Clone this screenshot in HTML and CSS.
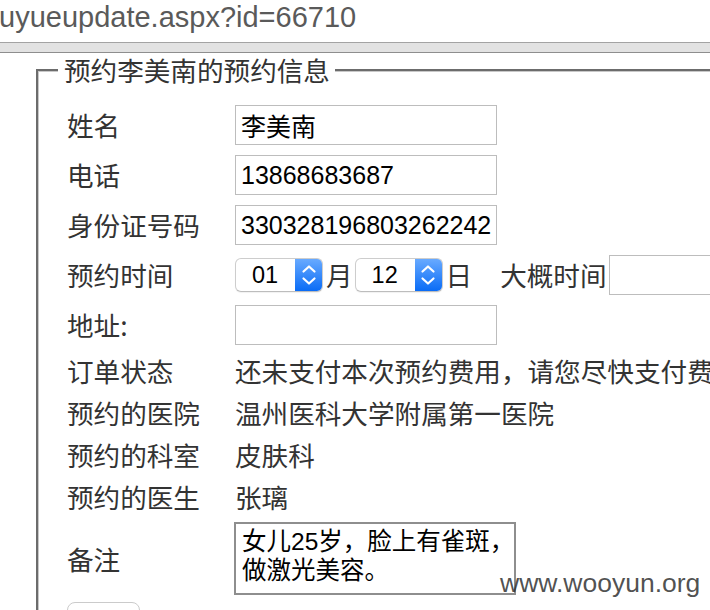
FILE: index.html
```html
<!DOCTYPE html>
<html lang="zh-CN">
<head>
<meta charset="utf-8">
<title>预约信息</title>
<link rel="stylesheet" href="styles.css">
</head>
<body>
<div class="url">uyueupdate.aspx?id=66710</div>
<div class="bar"></div>
<fieldset class="box">
  <legend class="box-title">预约李美南的预约信息</legend>
  <table class="form">
    <colgroup><col class="c1"><col class="c2"></colgroup>
    <tr>
      <td class="lbl">姓名</td>
      <td><input class="txt" type="text" value="李美南"></td>
    </tr>
    <tr>
      <td class="lbl">电话</td>
      <td><input class="txt" type="text" value="13868683687"></td>
    </tr>
    <tr>
      <td class="lbl">身份证号码</td>
      <td><input class="txt" type="text" value="330328196803262242"></td>
    </tr>
    <tr>
      <td class="lbl">预约时间</td>
      <td>
        <div class="date">
          <span class="sel"><span class="sel-val">01</span><span class="step"><svg width="16" height="24" viewBox="0 0 16 24"><path d="M2.5 8.5 L8 3.5 L13.5 8.5 M2.5 15.5 L8 20.5 L13.5 15.5" fill="none" stroke="#fff" stroke-width="2.2" stroke-linecap="round" stroke-linejoin="round"/></svg></span></span>
          <span class="unit">月</span>
          <span class="sel"><span class="sel-val">12</span><span class="step"><svg width="16" height="24" viewBox="0 0 16 24"><path d="M2.5 8.5 L8 3.5 L13.5 8.5 M2.5 15.5 L8 20.5 L13.5 15.5" fill="none" stroke="#fff" stroke-width="2.2" stroke-linecap="round" stroke-linejoin="round"/></svg></span></span>
          <span class="unit">日</span>
          <span class="unit about">大概时间</span>
          <input class="txt wide" type="text" value="">
        </div>
      </td>
    </tr>
    <tr>
      <td class="lbl">地址:</td>
      <td><input class="txt" type="text" value=""></td>
    </tr>
    <tr class="plain">
      <td class="lbl">订单状态</td>
      <td class="val">还未支付本次预约费用，请您尽快支付费用，以免影响您的预约</td>
    </tr>
    <tr class="plain">
      <td class="lbl">预约的医院</td>
      <td class="val">温州医科大学附属第一医院</td>
    </tr>
    <tr class="plain">
      <td class="lbl">预约的科室</td>
      <td class="val">皮肤科</td>
    </tr>
    <tr class="plain">
      <td class="lbl">预约的医生</td>
      <td class="val">张璃</td>
    </tr>
    <tr class="note-row">
      <td class="lbl">备注</td>
      <td><textarea class="note" wrap="off">女儿25岁，脸上有雀斑，
做激光美容。</textarea></td>
    </tr>
    <tr class="btn-row">
      <td class="lbl"><button class="btn" type="button">修改</button></td>
      <td></td>
    </tr>
  </table>
</fieldset>
<div class="mark">www.wooyun.org</div>
</body>
</html>
```
FILE: styles.css
```css
html, body {
  margin: 0;
  padding: 0;
  background: #fff;
}
body {
  width: 710px;
  height: 610px;
  overflow: hidden;
  position: relative;
  font-family: "Noto Sans CJK SC", "Liberation Sans", sans-serif;
  color: #333;
}
.url {
  height: 34px;
  line-height: 34px;
  font-family: "Liberation Sans", sans-serif;
  font-size: 29px;
  color: #5a5a5a;
  margin-left: -1px;
  white-space: nowrap;
}
.bar {
  margin-top: 8px;
  height: 9px;
  background: #e2e2e2;
  border-top: 1px solid #a3a3a3;
  border-bottom: 1px solid #8e8e8e;
}
.box {
  margin: 2px 0 0 36px;
  width: 760px;
  border: 2px solid #6c6c6c;
  box-shadow: inset 1px 1px 0 #c8c8c8;
  padding: 15px 0 0 20px;
  min-width: 0;
}
.box-title {
  background: #fff;
  padding: 0 5px 0 6px;
  font-size: 26.6px;
  line-height: 30px;
  color: #333;
}
.form {
  margin-left: 9px;
  border-collapse: collapse;
  table-layout: fixed;
  width: 730px;
}
.c1 {
  width: 168px;
}
.c2 {
  width: 562px;
}
.form td {
  padding: 5px 0;
  vertical-align: middle;
  font-size: 26.6px;
  line-height: 32px;
  white-space: nowrap;
  overflow: visible;
}
.form td.lbl {
  color: #333;
}
.val {
  color: #333;
}
.txt {
  display: block;
  box-sizing: border-box;
  width: 262px;
  height: 40px;
  margin: 0;
  border: 1px solid #bdbdbd;
  border-radius: 0;
  padding: 0 4px 0 5px;
  font-family: "Liberation Sans", "Noto Sans CJK SC", sans-serif;
  font-size: 25px;
  color: #000;
  background: #fff;
  outline: none;
}
.date {
  display: flex;
  align-items: center;
  height: 40px;
}
.sel {
  display: inline-flex;
  box-sizing: border-box;
  width: 88px;
  height: 34px;
  border: 1px solid #cdcdcd;
  border-bottom-color: #bdbdbd;
  border-radius: 6px;
  overflow: hidden;
  background: #fff;
  box-shadow: 0 1px 1px rgba(0, 0, 0, 0.06);
  flex: none;
}
.sel-val {
  flex: 1;
  padding-left: 16px;
  font-family: "Liberation Sans", sans-serif;
  font-size: 23.5px;
  line-height: 32px;
  color: #000;
}
.step {
  width: 27px;
  display: flex;
  align-items: center;
  justify-content: center;
  background: linear-gradient(#68aaff, #0a6cf6);
}
.unit {
  margin: 0 2px 0 3px;
  font-size: 26.6px;
  line-height: 32px;
  color: #333;
  flex: none;
}
.unit.about {
  margin: 0 2px 0 26px;
}
.txt.wide {
  width: 200px;
  flex: none;
}
.note-row td {
  padding: 4px 0 6px;
}
.note {
  display: block;
  box-sizing: border-box;
  width: 282px;
  height: 73px;
  margin: 0 0 0 -1px;
  border: 2px solid #8e8e8e;
  padding: 3px 0 3px 6px;
  font-family: "Liberation Sans", "Noto Sans CJK SC", sans-serif;
  font-size: 24.5px;
  line-height: 29px;
  color: #000;
  resize: none;
  overflow: hidden;
  white-space: pre;
  outline: none;
}
.btn-row td {
  padding: 1px 0 0;
}
.btn {
  width: 73px;
  height: 36px;
  border: 1px solid #cbcbcb;
  border-radius: 8px;
  background: #fff;
  font-family: "Noto Sans CJK SC", sans-serif;
  font-size: 24px;
  color: #333;
  padding: 0;
}
.mark {
  position: absolute;
  left: 500px;
  top: 568px;
  font-family: "Liberation Sans", sans-serif;
  font-size: 26.5px;
  line-height: 30px;
  color: rgba(50, 50, 50, 0.85);
  white-space: nowrap;
}
```
